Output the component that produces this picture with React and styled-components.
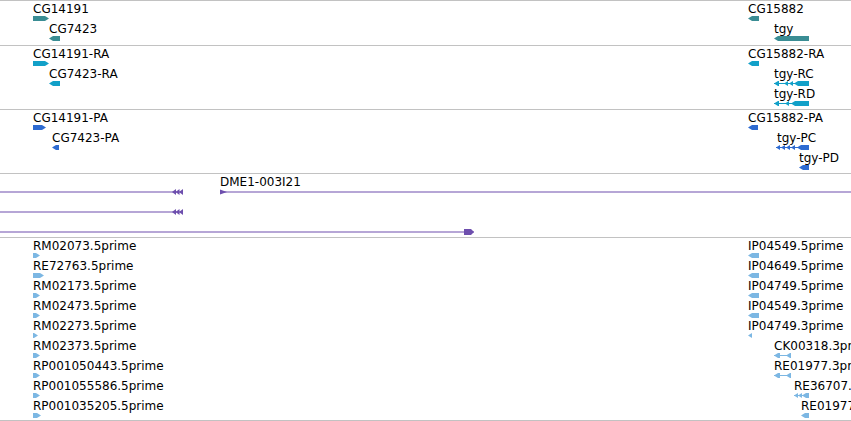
import React from 'react';
import styled, { createGlobalStyle } from 'styled-components';

const GlobalStyle = createGlobalStyle`
  html, body {
    margin: 0;
    padding: 0;
    background: #fff;
    overflow: hidden;
  }
  body {
    font-family: "DejaVu Sans", "Liberation Sans", sans-serif;
  }
`;

const Browser = styled.div`
  width: 851px;
  height: 421px;
  overflow: hidden;
  display: flex;
  flex-direction: column;
  background: #fff;
`;

const Track = styled.div`
  position: relative;
  flex: none;
  height: ${p => p.$h}px;
  border-top: 1px solid #c2c2c2;
  border-bottom: ${p => (p.$last ? '1px solid #c2c2c2' : 'none')};
`;

// a feature sits on the track canvas at its genomic position
const FeatureBox = styled.div`
  position: absolute;
  left: ${p => p.$x}px;
  top: ${p => p.$y}px;
  display: flex;
  flex-direction: column;
  align-items: flex-start;
  padding-top: 1px;
`;

const Label = styled.span`
  font-size: 12px;
  line-height: 14px;
  color: #000;
  white-space: nowrap;
`;

const Svg = styled.svg`
  display: block;
  overflow: visible;
  margin-left: ${p => p.$dx || 0}px;
`;

const LineSvg = styled.svg`
  position: absolute;
  left: ${p => p.$x}px;
  top: ${p => p.$y}px;
  overflow: visible;
`;

const TEAL = '#3a8d94';
const CYAN = '#12a0c8';
const BLUE = '#2e6bd1';
const EST = '#7cb7e3';
const PURPLE = '#6e4fae';

function exonPoints(a, b, dir, h) {
  const t = Math.min(4, b - a);
  if (dir > 0) return `${a},0 ${b - t},0 ${b},${h / 2} ${b - t},${h} ${a},${h}`;
  return `${a},${h / 2} ${a + t},0 ${b},0 ${b},${h} ${a + t},${h}`;
}

function Glyph({ exons, dir, color, x, h = 5 }) {
  const start = exons[0][0];
  const end = exons[exons.length - 1][1];
  return (
    <Svg $dx={start - x} width={end - start} height={h}>
      {exons.length > 1 && (
        <rect x={0} y={Math.floor(h / 2)} width={end - start} height={1} fill={color} />
      )}
      {exons.map(([a, b], i) => (
        <polygon key={i} points={exonPoints(a - start, b - start, dir, h)} fill={color} />
      ))}
    </Svg>
  );
}

function Feature({ f, color }) {
  return (
    <FeatureBox $x={f.x} $y={20 * f.row}>
      <Label>{f.label}</Label>
      <Glyph exons={f.exons} dir={f.dir} color={color} x={f.x} />
    </FeatureBox>
  );
}

const genes = [
  { x: 33, row: 0, label: 'CG14191', dir: 1, exons: [[33, 49]] },
  { x: 49, row: 1, label: 'CG7423', dir: -1, exons: [[49, 60]] },
  { x: 748, row: 0, label: 'CG15882', dir: -1, exons: [[748, 759]] },
  { x: 774, row: 1, label: 'tgy', dir: -1, exons: [[774, 809]] },
];

const transcripts = [
  { x: 33, row: 0, label: 'CG14191-RA', dir: 1, exons: [[33, 49]] },
  { x: 49, row: 1, label: 'CG7423-RA', dir: -1, exons: [[49, 60]] },
  { x: 748, row: 0, label: 'CG15882-RA', dir: -1, exons: [[748, 759]] },
  { x: 774, row: 1, label: 'tgy-RC', dir: -1, exons: [[774, 779], [784, 788], [789, 793], [794, 809]] },
  { x: 774, row: 2, label: 'tgy-RD', dir: -1, exons: [[774, 779], [785, 789], [791, 809]] },
];

const proteins = [
  { x: 33, row: 0, label: 'CG14191-PA', dir: 1, exons: [[33, 46]] },
  { x: 52, row: 1, label: 'CG7423-PA', dir: -1, exons: [[52, 59]] },
  { x: 748, row: 0, label: 'CG15882-PA', dir: -1, exons: [[748, 758]] },
  { x: 777, row: 1, label: 'tgy-PC', dir: -1, exons: [[776, 780], [781, 785], [786, 790], [791, 795], [797, 809]] },
  { x: 799, row: 2, label: 'tgy-PD', dir: -1, exons: [[799, 809]] },
];

const leftEsts = [
  ['RM02073.5prime', 40],
  ['RE72763.5prime', 44],
  ['RM02173.5prime', 40],
  ['RM02473.5prime', 40],
  ['RM02273.5prime', 38],
  ['RM02373.5prime', 40],
  ['RP001050443.5prime', 40],
  ['RP001055586.5prime', 40],
  ['RP001035205.5prime', 41],
].map(([label, end], row) => ({ x: 33, row, label, dir: 1, exons: [[33, end]] }));

const rightEsts = [
  { x: 748, row: 0, label: 'IP04549.5prime', dir: -1, exons: [[748, 759]] },
  { x: 748, row: 1, label: 'IP04649.5prime', dir: -1, exons: [[748, 759]] },
  { x: 748, row: 2, label: 'IP04749.5prime', dir: -1, exons: [[748, 759]] },
  { x: 748, row: 3, label: 'IP04549.3prime', dir: -1, exons: [[748, 759]] },
  { x: 748, row: 4, label: 'IP04749.3prime', dir: -1, exons: [[748, 752]] },
  { x: 774, row: 5, label: 'CK00318.3prime', dir: -1, exons: [[774, 780], [786, 791]] },
  { x: 774, row: 6, label: 'RE01977.3prime', dir: -1, exons: [[774, 780], [786, 791]] },
  { x: 794, row: 7, label: 'RE36707.3prime', dir: -1, exons: [[794, 798], [798, 802], [802, 809]] },
  { x: 801, row: 8, label: 'RE01977.5prime', dir: -1, exons: [[801, 809]] },
];

// clone hits: thin lines with arrowheads
const CloneLine = ({ x0, x1, y, tailLeft, startRight, endRight }) => (
  <LineSvg $x={x0} $y={y - 3} width={x1 - x0} height={6}>
    <rect x={0} y={2.5} width={x1 - x0} height={1} fill={PURPLE} />
    {tailLeft &&
      [172, 175.5, 179].map(a => (
        <polygon key={a} points={`${a - x0},3 ${a - x0 + 4},0 ${a - x0 + 4},6`} fill={PURPLE} />
      ))}
    {startRight && <polygon points="0,0.5 7,3 0,5.5" fill={PURPLE} />}
    {endRight && (
      <polygon
        points={`${464 - x0},0 ${471 - x0},0 ${474 - x0},3 ${471 - x0},6 ${464 - x0},6`}
        fill={PURPLE}
      />
    )}
  </LineSvg>
);

export default function App() {
  return (
    <>
      <GlobalStyle />
      <Browser>
        <Track $h={44}>
          {genes.map(f => <Feature key={f.label} f={f} color={TEAL} />)}
        </Track>
        <Track $h={63}>
          {transcripts.map(f => <Feature key={f.label} f={f} color={CYAN} />)}
        </Track>
        <Track $h={63}>
          {proteins.map(f => <Feature key={f.label} f={f} color={BLUE} />)}
        </Track>
        <Track $h={63}>
          <FeatureBox $x={220} $y={0}>
            <Label>DME1-003I21</Label>
          </FeatureBox>
          <CloneLine x0={0} x1={183} y={18} tailLeft />
          <CloneLine x0={220} x1={851} y={18} startRight />
          <CloneLine x0={0} x1={183} y={38} tailLeft />
          <CloneLine x0={0} x1={474} y={58} endRight />
        </Track>
        <Track $h={182} $last>
          {leftEsts.map(f => <Feature key={f.label} f={f} color={EST} />)}
          {rightEsts.map(f => <Feature key={f.label + f.row} f={f} color={EST} />)}
        </Track>
      </Browser>
    </>
  );
}
